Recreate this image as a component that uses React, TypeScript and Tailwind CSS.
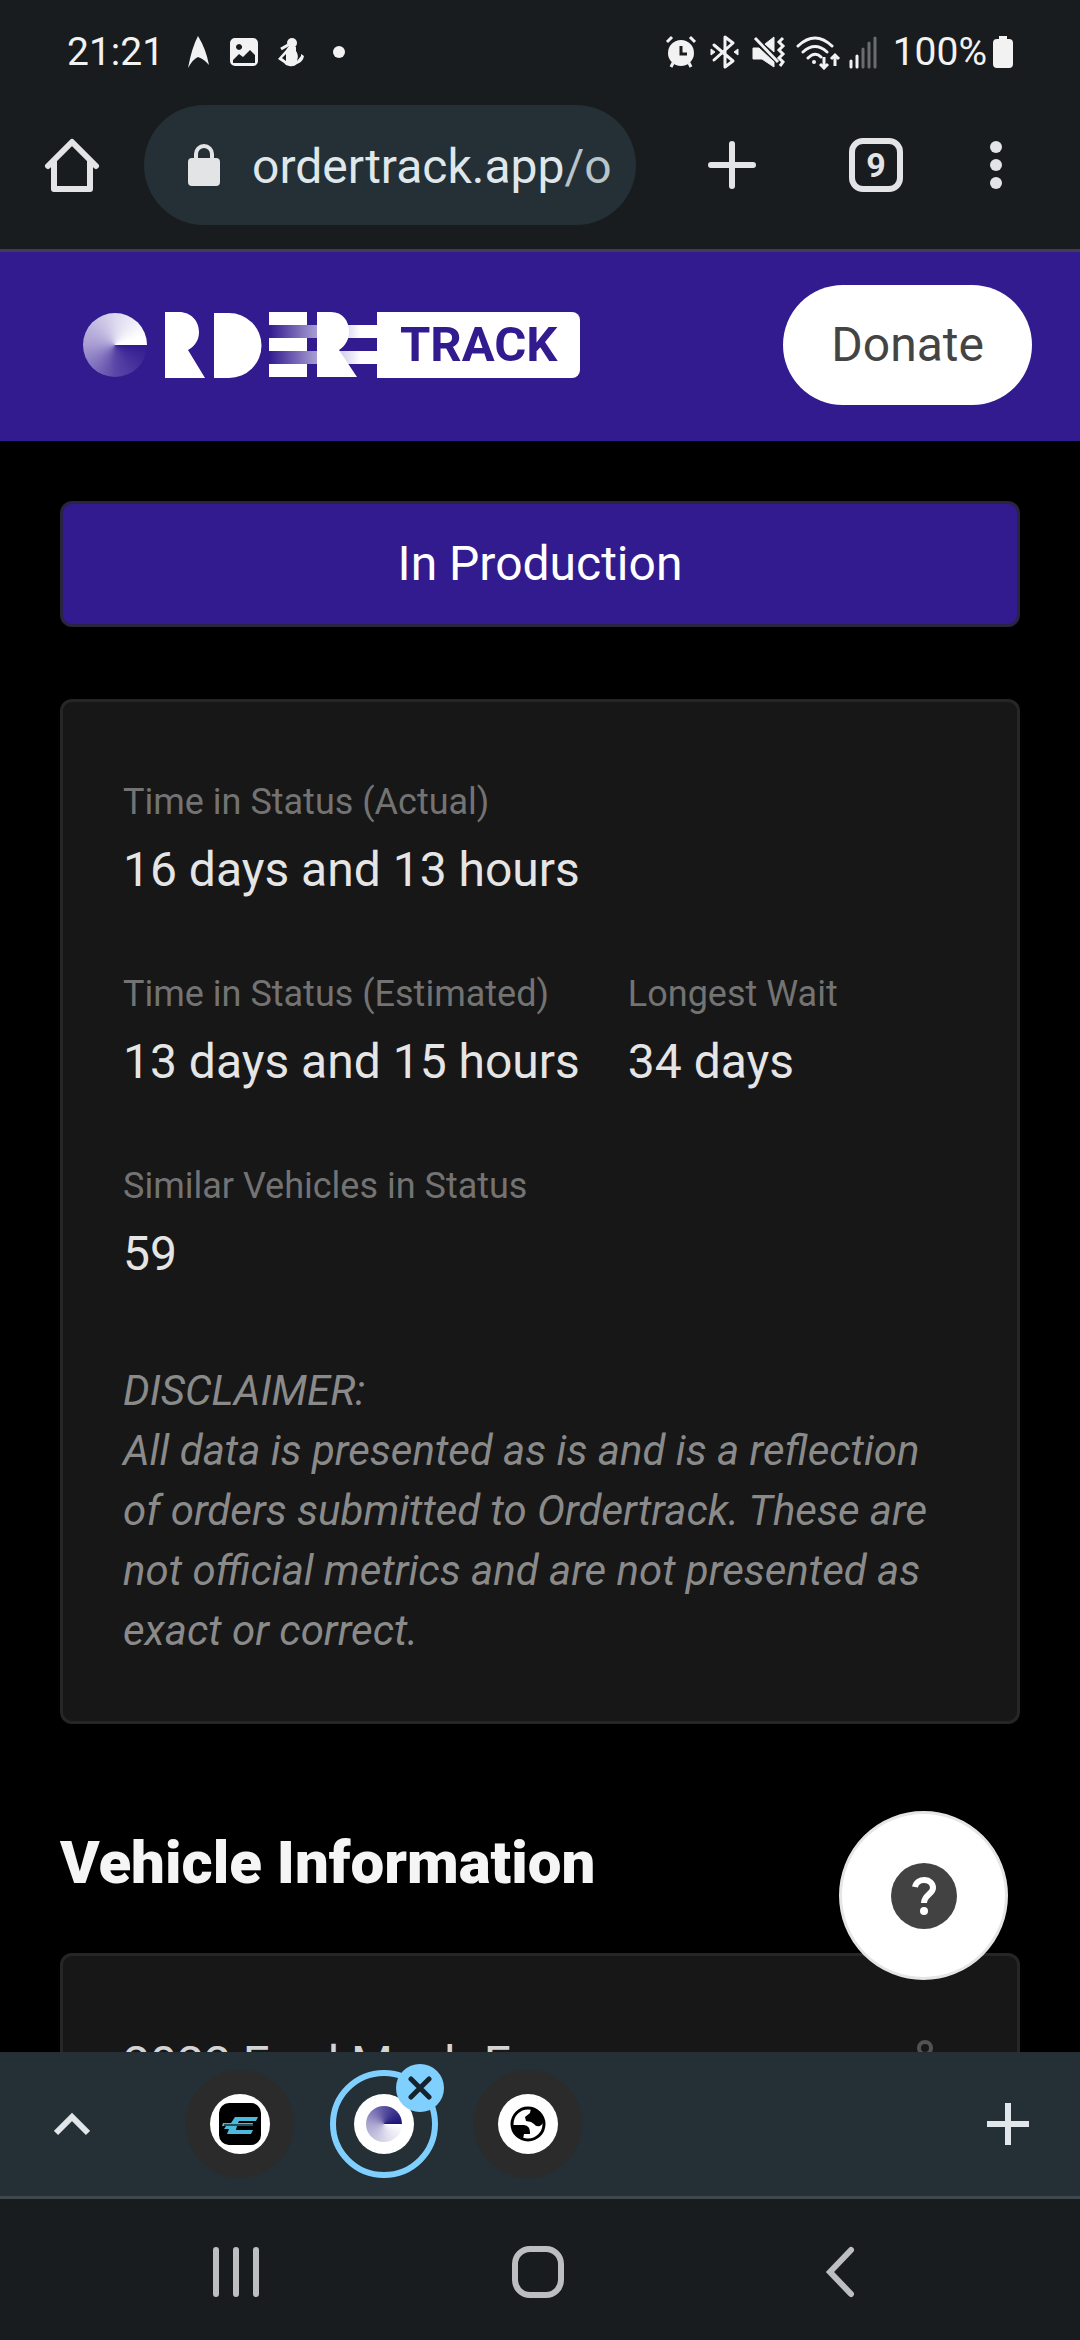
import { ReactNode } from "react";

function StatusBar() {
  return (
    <div className="flex h-[105px] items-center justify-between px-[67px] pb-0.5 text-[39px] leading-[48px] text-[#f2f2f2]">
      <div className="flex items-center">
        <span>21:21</span>
        <svg width="180" height="34" viewBox="0 0 180 34" fill="currentColor" className="ml-5">
          <path d="M14 1Q8 12 4 33Q9 24 14 22Q20 24 25 30Q22 14 14 1Z" />
          <path
            fillRule="evenodd"
            d="M51 3H69a5 5 0 0 1 5 5V26a5 5 0 0 1-5 5H51a5 5 0 0 1-5-5V8a5 5 0 0 1 5-5ZM55 9a3 3 0 1 0 .1 0ZM49 25V28H71V20L66 15L59 22L55 19Z"
          />
          <circle cx="108" cy="8" r="5" />
          <path d="M104 12H112V16Q115 20 113 26L117 21L117 19L120 21Q119 27 113 29Q110 32 105 31Q102 31 100 28L94 24L102 15ZM102 19L98 23L102 26Z" fillRule="evenodd" />
          <path d="M97 14L104 10" stroke="currentColor" strokeWidth="3" />
          <circle cx="155" cy="17" r="6" />
        </svg>
      </div>
      <div className="flex items-center">
        <svg width="214" height="36" viewBox="0 0 214 36" fill="none" stroke="currentColor">
          {/* alarm */}
          <circle cx="16" cy="19" r="13" fill="currentColor" stroke="none" />
          <path d="M2 8L7 3M25 3L30 8M6 33L8 29M26 33L24 29" strokeWidth="3" />
          <path d="M16 12V20H22" stroke="#191c1e" strokeWidth="3" />
          {/* bluetooth */}
          <path d="M49 11L68 27L60 33V3L68 9L49 26" strokeWidth="3" strokeLinejoin="round" strokeLinecap="round" />
          <path d="M46 15L50 18L46 21ZM73 15L69 18L73 21Z" fill="currentColor" strokeWidth="1" />
          {/* muted speaker */}
          <path d="M88 14H94L109 28V33L97 25H88ZM100 10L109 3V18Z" fill="currentColor" strokeWidth="1" />
          <path d="M90 4L113 28" strokeWidth="3" />
          <path d="M118 4L114 8L118 12L114 16L118 20L114 24L118 28L115 32" strokeWidth="3" />
          {/* wifi */}
          <path d="M133 12Q150 -4 167 12M138 18Q150 7 162 18M143 24Q150 17 156 23" strokeWidth="3" strokeLinecap="round" />
          <circle cx="149" cy="28" r="2" fill="currentColor" stroke="none" />
          <path d="M159 23V34M155 30L159 34L163 30M170 32V21M166 25L170 21L174 25" strokeWidth="3" />
          {/* signal */}
          <path d="M186 27V33M192 22V33" strokeWidth="3" strokeLinecap="round" />
          <path d="M198 15V33M204 9V33M210 4V33" stroke="#6b6c6e" strokeWidth="3" strokeLinecap="round" />
        </svg>
        <span className="ml-[14px]">100%</span>
        <svg width="20" height="34" viewBox="0 0 20 34" fill="currentColor" className="ml-1.5">
          <path d="M6 1H14V4H16a4 4 0 0 1 4 4V29a4 4 0 0 1-4 4H4a4 4 0 0 1-4-4V8a4 4 0 0 1 4-4H6Z" />
        </svg>
      </div>
    </div>
  );
}

function Toolbar() {
  return (
    <div className="flex items-center border-b-3 border-[#3f3b58] pb-6 pr-9 text-[#e3e4e6]">
      <button aria-label="Home" className="flex w-36 justify-center">
        <svg width="56" height="56" viewBox="0 0 56 56" fill="none" stroke="currentColor" strokeWidth="6" strokeLinejoin="round" strokeLinecap="round">
          <path d="M4 29L28 5L52 29" />
          <path d="M10 25V52H46V25" />
        </svg>
      </button>
      <button className="flex h-30 min-w-0 flex-1 items-center overflow-hidden rounded-full bg-[#243035] pl-11 text-[48px] leading-[60px]">
        <svg width="32" height="42" viewBox="0 0 32 42" fill="none" className="shrink-0">
          <rect y="14" width="32" height="28" rx="4" fill="currentColor" />
          <path d="M8 16V10a8 8 0 0 1 16 0V16" stroke="currentColor" strokeWidth="4" />
        </svg>
        <span className="ml-8 pt-1 whitespace-nowrap text-[#dfe7eb]">
          ordertrack.app<span className="text-[#b7c4ca]">/o</span>
        </span>
      </button>
      <button aria-label="New tab" className="ml-6 flex w-36 justify-center">
        <svg width="48" height="48" viewBox="0 0 48 48" stroke="currentColor" strokeWidth="6" strokeLinecap="round">
          <path d="M24 3V45M3 24H45" />
        </svg>
      </button>
      <button className="flex w-36 justify-center">
        <span className="flex size-[54px] items-center justify-center rounded-[14px] border-6 border-current text-[34px] leading-[40px] font-bold">
          9
        </span>
      </button>
      <button aria-label="Menu" className="flex w-24 justify-center">
        <svg width="12" height="48" viewBox="0 0 12 48" fill="currentColor">
          <circle cx="6" cy="6" r="6" />
          <circle cx="6" cy="24" r="6" />
          <circle cx="6" cy="42" r="6" />
        </svg>
      </button>
    </div>
  );
}

function Logo() {
  return (
    <a href="#" aria-label="Ordertrack" className="flex items-center">
      <span className="size-16 rounded-full bg-[conic-gradient(from_90deg,#321a8f,#5a47a8_25%,#a79cd3_50%,#dcd8ee_75%,#ffffff_95%)]" />
      <svg width="212" height="66" viewBox="0 0 212 66" fill="#fff" className="ml-[18px]">
        <defs>
          <linearGradient id="speed" gradientUnits="userSpaceOnUse" x1="104" y1="0" x2="212" y2="0">
            <stop offset="0" stopColor="#321a8f" />
            <stop offset="0.4" stopColor="#9d92cc" />
            <stop offset="0.75" stopColor="#e6e3f4" />
            <stop offset="0.85" stopColor="#ffffff" />
          </linearGradient>
        </defs>
        <path d="M0 0H14C26 0 34 9 34 20C34 28 30 34 23 38L40 66H0Z" />
        <path d="M49 1H64A32 32 0 0 1 64 66H49Z" />
        <path d="M104 0H142V13H104ZM104 26H142V39H104ZM104 52H142V65H104Z" />
        <path d="M104 13H212V26H104ZM104 39H212V52H104Z" fill="url(#speed)" />
        <path d="M152 0H166C178 0 184 9 184 20C184 28 180 34 174 38L192 65H152Z" />
      </svg>
      <span className="rounded-r-lg bg-white px-[23px] text-[49px] leading-[66px] font-bold text-[#321a8f]">TRACK</span>
    </a>
  );
}

function Stat({ label, value }: { label: string; value: string }) {
  return (
    <div>
      <p className="text-[36px] leading-[56px] text-[#737373]">{label}</p>
      <p className="mt-1 text-[48px] leading-[72px] text-[#e5e5e5]">{value}</p>
    </div>
  );
}

function TabIcon({ label, children }: { label: string; children: ReactNode }) {
  return (
    <button aria-label={label} className="flex w-36 justify-center">
      <span className="flex size-27 items-center justify-center rounded-full bg-[#2b2b2b]">
        <span className="flex size-15 items-center justify-center rounded-full bg-white">{children}</span>
      </span>
    </button>
  );
}

function TabStrip() {
  return (
    <div className="flex h-[147px] shrink-0 items-center border-b-3 border-[#3d494d] bg-[#243035] text-[#e0e6ea]">
      <button aria-label="Expand tabs" className="mr-6 flex w-36 justify-center">
        <svg width="36" height="24" viewBox="0 0 36 24" fill="none" stroke="currentColor" strokeWidth="6">
          <path d="M2 21L18 5L34 21" />
        </svg>
      </button>
      <TabIcon label="Forum tab">
        <svg width="42" height="42" viewBox="0 0 42 42">
          <rect width="42" height="42" rx="10" fill="#000" />
          <path d="M16 14H39L37 18H20L19 20H34L33 23H18L17 27H34L32 31H8L10 26H5L7 23H3L4 20H12Z" fill="#4fb9dc" />
          <path d="M5 22H34" stroke="#1d5265" strokeWidth="2" />
        </svg>
      </TabIcon>
      <button aria-label="Ordertrack tab" className="flex w-36 justify-center">
        <span className="relative flex size-27 items-center justify-center rounded-full border-6 border-[#80d0ff]">
          <span className="flex size-15 items-center justify-center rounded-full bg-white">
            <span className="size-9 rounded-full bg-[conic-gradient(from_90deg,#ffffff,#e2e0f0_20%,#a9a5d0_50%,#5a529f_75%,#1b127a)]" />
          </span>
          <span className="absolute -top-3 -right-3 flex size-12 items-center justify-center rounded-full bg-[#80d0ff]">
            <svg width="24" height="24" viewBox="0 0 24 24" stroke="#15232c" strokeWidth="5" strokeLinecap="round">
              <path d="M3 3L21 21M21 3L3 21" />
            </svg>
          </span>
        </span>
      </button>
      <TabIcon label="Web tab">
        <svg width="36" height="36" viewBox="0 0 36 36">
          <circle cx="18" cy="18" r="16" fill="#fff" stroke="#000" strokeWidth="3" />
          <path d="M21 2Q31 4 34 14Q33 18 30 20Q26 21 24 18L21 16L16 15L15 11L20 7Z" />
          <path d="M2 19H14Q20 20 20 26V28H14L13 33Q4 30 2 19Z" />
        </svg>
      </TabIcon>
      <button aria-label="Add tab" className="ml-auto flex w-36 justify-center">
        <svg width="42" height="42" viewBox="0 0 42 42" stroke="currentColor" strokeWidth="6">
          <path d="M21 0V42M0 21H42" />
        </svg>
      </button>
    </div>
  );
}

function NavBar() {
  return (
    <div className="flex h-[141px] shrink-0 items-center bg-[#191c1e] pt-1 pl-[85px] pr-[89px] text-[#bdbec0]">
      <button aria-label="Recent apps" className="flex flex-1 justify-center">
        <svg width="46" height="52" viewBox="0 0 46 52" stroke="currentColor" strokeWidth="6" strokeLinecap="round">
          <path d="M3 4V48M23 4V48M43 4V48" />
        </svg>
      </button>
      <button aria-label="Home screen" className="flex flex-1 justify-center">
        <span className="size-[52px] rounded-[18px] border-6 border-current" />
      </button>
      <button aria-label="Back" className="flex flex-1 justify-center">
        <svg width="30" height="52" viewBox="0 0 30 52" fill="none" stroke="currentColor" strokeWidth="6" strokeLinecap="round">
          <path d="M26 4L5 26L26 48" />
        </svg>
      </button>
    </div>
  );
}

function App() {
  return (
    <div className="flex h-screen flex-col bg-black font-[Roboto,sans-serif]">
      <div className="shrink-0 bg-[#191c1e]">
        <StatusBar />
        <Toolbar />
      </div>
      <div className="relative min-h-0 flex-1 overflow-hidden">
        <header className="flex items-center justify-between bg-[#321a8f] pt-[33px] pb-9 pl-[83px] pr-12">
          <Logo />
          <button className="h-30 rounded-full bg-white px-12 text-[48px] leading-[72px] text-[#444444]">Donate</button>
        </header>
        <main className="px-[60px] pt-[60px]">
          <div className="rounded-xl border-3 border-[#2a2440] bg-[#321a8f] py-6 text-center text-[48px] leading-[72px] text-white">
            In Production
          </div>
          <section className="mt-[72px] rounded-xl border-3 border-[#262626] bg-[#171717] px-[60px] pt-[72px] pb-[60px]">
            <div className="flex flex-col gap-[60px]">
              <Stat label="Time in Status (Actual)" value="16 days and 13 hours" />
              <div className="flex gap-12">
                <Stat label="Time in Status (Estimated)" value="13 days and 15 hours" />
                <Stat label="Longest Wait" value="34 days" />
              </div>
              <Stat label="Similar Vehicles in Status" value="59" />
            </div>
            <p className="mt-[71px] text-[42px] leading-[60px] text-[#8a8a8a] italic">
              DISCLAIMER:
              <br />
              All data is presented as is and is a reflection of orders submitted to Ordertrack. These are not official
              metrics and are not presented as exact or correct.
            </p>
          </section>
          <h2 className="mt-[103px] text-[60px] leading-[72px] font-black text-[#f5f5f5]">Vehicle Information</h2>
          <section className="mt-[54px] flex justify-between rounded-xl border-3 border-[#262626] bg-[#171717] px-[60px] pt-[72px] pb-[60px]">
            <p className="text-[48px] leading-[72px] text-[#d4d4d4]">2022 Ford Mach-E</p>
            <svg width="48" height="48" viewBox="0 0 48 48" fill="none" stroke="#525252" strokeWidth="4" className="mt-3">
              <circle cx="16" cy="8" r="6" />
              <path d="M12 12L2 20M16 14L24 30" />
            </svg>
          </section>
        </main>
        <button
          aria-label="Help"
          className="absolute right-18 bottom-18 flex size-[169px] items-center justify-center rounded-full border-3 border-[#e5e5e5] bg-white"
        >
          <svg width="68" height="68" viewBox="0 0 68 68" fill="none">
            <circle cx="34" cy="34" r="33" fill="#424242" />
            <path d="M25 25C27 15 43 16 43 26C43 32 34 33 34 41" stroke="#fff" strokeWidth="6" />
            <circle cx="34" cy="49" r="4" fill="#fff" />
          </svg>
        </button>
      </div>
      <TabStrip />
      <NavBar />
    </div>
  );
}

export default App;
